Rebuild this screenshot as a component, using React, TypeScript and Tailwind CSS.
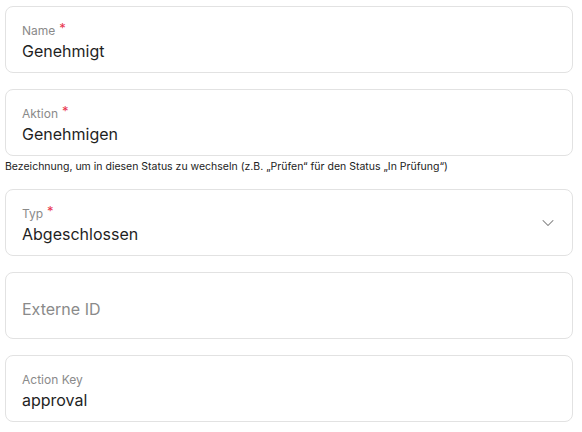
import { ChevronDown } from 'lucide-react';

interface FieldProps {
  label?: string;
  value?: string;
  placeholder?: string;
  required?: boolean;
  select?: boolean;
}

function Field({ label, value, placeholder, required, select }: FieldProps) {
  return (
    <div className="relative flex h-[67px] flex-col justify-center rounded-[8px] border border-[#e2e2e2] bg-white px-[16px] pt-[6px]">
      {label && (
        <div className="flex items-start text-[12px] leading-[16px] text-[#8a8a8a]">
          {label}
          {required && <span className="ml-[4px] -mt-[3px] text-[13px] text-[#e8344e]">*</span>}
        </div>
      )}
      {value ? (
        <div className="mt-[1px] text-[16px] leading-[22px] text-[#1f1f1f]">{value}</div>
      ) : (
        <div className="text-[16px] leading-[22px] text-[#8a8a8a]">{placeholder}</div>
      )}
      {select && (
        <ChevronDown className="absolute right-[14px] top-[23px] h-[20px] w-[20px] text-[#7a7a7a]" strokeWidth={1.25} />
      )}
    </div>
  );
}

export default function App() {
  return (
    <main className="min-h-screen bg-white pt-[6px] pl-[5px]" style={{ fontFamily: 'Inter, "Noto Sans", sans-serif' }}>
      <div className="flex w-[568px] flex-col">
        <Field label="Name" value="Genehmigt" required />
        <div className="mt-[16px]">
          <Field label="Aktion" value="Genehmigen" required />
        </div>
        <p className="mt-[4px] text-[10.5px] leading-[13px] text-[#222]">
          Bezeichnung, um in diesen Status zu wechseln (z.B. „Prüfen“ für den Status „In Prüfung“)
        </p>
        <div className="mt-[16px]">
          <Field label="Typ" value="Abgeschlossen" required select />
        </div>
        <div className="mt-[16px]">
          <Field placeholder="Externe ID" />
        </div>
        <div className="mt-[16px]">
          <Field label="Action Key" value="approval" />
        </div>
      </div>
    </main>
  );
}
